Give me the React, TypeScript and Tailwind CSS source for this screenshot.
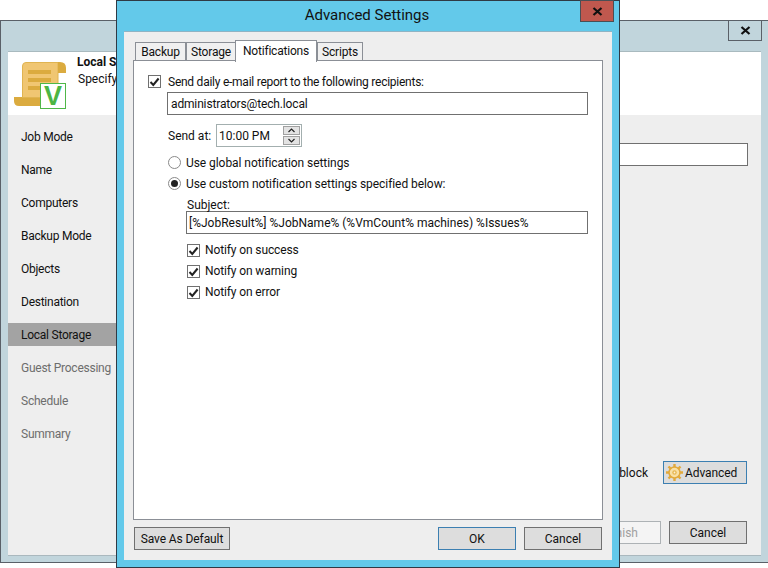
import type { ReactNode } from 'react'

const font = "[font-family:Roboto,'Noto_Sans',sans-serif]"

const steps = [
  { label: 'Job Mode' },
  { label: 'Name' },
  { label: 'Computers' },
  { label: 'Backup Mode' },
  { label: 'Objects' },
  { label: 'Destination' },
  { label: 'Local Storage', active: true },
  { label: 'Guest Processing', muted: true },
  { label: 'Schedule', muted: true },
  { label: 'Summary', muted: true },
]

function CloseGlyph() {
  return (
    <svg width="11" height="9" viewBox="0 0 11 9" fill="none">
      <path d="M1.5 1L9.5 8M9.5 1L1.5 8" stroke="#111" strokeWidth="2.2" />
    </svg>
  )
}

function Check({ label, className = '', textClass = 'ml-[5px] -mt-[2px] tracking-[-0.12px]' }: { label: string; className?: string; textClass?: string }) {
  return (
    <div className={`flex items-center h-[13px] ${className}`}>
      <span className="w-[13px] h-[13px] border border-[#707070] bg-white flex items-center justify-center shrink-0">
        <svg width="11" height="10" viewBox="0 0 11 10" fill="none">
          <path d="M1.5 5L4.3 8L9.6 1.5" stroke="#222" strokeWidth="2" />
        </svg>
      </span>
      <span className={`${textClass} leading-[16px] whitespace-nowrap`}>{label}</span>
    </div>
  )
}

function Radio({ label, checked = false, className = '' }: { label: string; checked?: boolean; className?: string }) {
  return (
    <div className={`flex items-center h-[13px] ${className}`}>
      <span className="w-[13px] h-[13px] rounded-full border border-[#8a8a8a] bg-white flex items-center justify-center shrink-0">
        {checked && <span className="w-[7px] h-[7px] rounded-full bg-[#222]" />}
      </span>
      <span className="ml-[5px] leading-[16px] whitespace-nowrap tracking-[-0.06px]">{label}</span>
    </div>
  )
}

function Button({ children, className = '', primary = false }: { children: ReactNode; className?: string; primary?: boolean }) {
  return (
    <div
      className={`h-[23px] flex items-center justify-center bg-[#dddddd] border ${
        primary ? 'border-[#3c7fb1]' : 'border-[#707070]'
      } leading-[16px] whitespace-nowrap ${className}`}
    >
      {children}
    </div>
  )
}

function Tab({ label, active = false, className = '' }: { label: string; active?: boolean; className?: string }) {
  if (active) {
    return (
      <div className={`h-[22px] -mb-[2px] relative z-10 bg-white border border-b-0 border-[#8b8f96] flex items-start justify-center pt-[2px] leading-[16px] tracking-[-0.2px] ${className}`}>
        {label}
      </div>
    )
  }
  return (
    <div className={`h-[18px] bg-[#f0f0f0] border border-b-0 border-[#8b8f96] flex items-center justify-center pt-[1px] leading-[16px] tracking-[-0.2px] ${className}`}>
      {label}
    </div>
  )
}

function ScrollLogo() {
  return (
    <div className="relative w-[52px] h-[47px]">
      <svg width="52" height="47" viewBox="0 0 52 47">
        <path d="M0 35H30V44H5Q0 44 0 39Z" fill="#dbab3f" />
        <path d="M8.5 4Q8.5 .5 12 .5H44V35.5H8.5Z" fill="#f0c672" stroke="#e0b451" />
        <path d="M44 0H46Q52 0 52 6V11H44Z" fill="#dbab3f" />
        <path d="M14 8H37V12H14ZM14 16H37V20H14ZM14 24H37V28H14Z" fill="#dbab3f" />
      </svg>
      <div className="absolute left-[26px] top-[21px] w-[26px] h-[26px] bg-white border border-[#4fb748] flex items-center justify-center">
        <span className="text-[#4cb543] text-[27px] leading-none font-bold [font-family:'Liberation_Sans',sans-serif]">V</span>
      </div>
    </div>
  )
}

function Gear() {
  return (
    <svg width="17" height="17" viewBox="0 0 17 17" fill="none">
      <g stroke="#e2a93b" strokeWidth="2.4">
        <path d="M8.5 0V17M0 8.5H17M2.5 2.5L14.5 14.5M14.5 2.5L2.5 14.5" />
      </g>
      <circle cx="8.5" cy="8.5" r="5.5" fill="#f8e0a6" stroke="#e2a93b" strokeWidth="1.5" />
      <circle cx="8.5" cy="8.5" r="2.2" fill="#e8b64f" />
      <circle cx="8.5" cy="8.5" r="0.9" fill="#fbf1d8" />
    </svg>
  )
}

function BackWindow() {
  return (
    <div className="absolute left-0 top-[20px] w-[768px] h-[543px] bg-[#c1d5dc] border border-[#5a6068] border-r-0 flex flex-col">
      <div className="h-[30px] shrink-0 flex justify-end pr-[6px]">
        <div className="w-[34px] h-[21px] -mt-[1px] border border-[#5a6068] flex items-center justify-center">
          <CloseGlyph />
        </div>
      </div>
      <div className="ml-[7px] mr-[7px] h-[505px] flex flex-col bg-[#eeeeee] border-b border-[#aab8be]">
        <div className="h-[64px] shrink-0 bg-white border-t border-[#a9babf] flex">
          <div className="ml-[6px] mt-[10px]">
            <ScrollLogo />
          </div>
          <div className="ml-[11px] mt-[2px] leading-[17px]">
            <div className="font-bold">Local Storage</div>
            <div className="ml-[1px]">Specify</div>
          </div>
        </div>
        <div className="flex-1 flex min-h-0">
          <div className="w-[108px] shrink-0 pt-[10px]">
            {steps.map((s) => (
              <div
                key={s.label}
                className={`h-[23px] mb-[10px] pl-[13px] pt-[1px] flex items-center whitespace-nowrap leading-[16px] tracking-[-0.25px] ${
                  s.active ? 'bg-[#a3a3a3]' : ''
                } ${s.muted ? 'text-[#6d6d6d]' : ''}`}
              >
                {s.label}
              </div>
            ))}
          </div>
          <div className="flex-1 flex flex-col items-end pr-[13px]">
            <div className="w-[300px] h-[23px] mt-[28px] bg-white border border-[#707070]" />
            <div className="mt-[295px] pr-[1px] h-[23px] flex items-center w-full justify-end">
              <span className="mr-[15px] leading-[16px]">block</span>
              <Button primary className="w-[84px] !justify-start pl-[2px] tracking-[-0.1px]">
                <span className="mr-[2px]">
                  <Gear />
                </span>
                Advanced
              </Button>
            </div>
            <div className="mt-[37px] pr-[1px] flex">
              <div className="w-[78px] h-[23px] flex items-center justify-center bg-[#f4f4f4] border border-[#adb2b5] text-[#a0a0a0] leading-[16px]">
                Finish
              </div>
              <Button className="w-[78px] ml-[8px]">Cancel</Button>
            </div>
          </div>
        </div>
      </div>
    </div>
  )
}

function SettingsDialog() {
  return (
    <div className="absolute left-[116px] top-0 w-[504px] h-[568px] bg-[#63c9ea] border border-[#2f3a45] flex flex-col">
      <div className="relative h-[30px] shrink-0 flex items-center justify-center pb-[2px] pr-[2px] text-[15px] leading-[20px]">
        Advanced Settings
        <div className="absolute right-[5px] -top-[1px] w-[34px] h-[22px] bg-[#c0584e] border border-[#4a4f55] flex items-center justify-center">
          <CloseGlyph />
        </div>
      </div>
      <div className="mx-[7px] h-[529px] bg-[#eeeeee] border-t border-[#8fb4c4] flex flex-col pl-[9px] pr-[9px]">
        <div className="flex items-end pl-[2px] h-[28px] shrink-0">
          <Tab label="Backup" className="w-[51px]" />
          <Tab label="Storage" className="w-[50px]" />
          <Tab label="Notifications" active className="w-[82px] -ml-[1px]" />
          <Tab label="Scripts" className="w-[46px]" />
        </div>
        <div className="h-[460px] bg-white border border-[#8b8f96] pl-[14px] pt-[14px] pr-[14px]">
          <Check label="Send daily e-mail report to the following recipients:" textClass="ml-[7px] tracking-[-0.25px]" />
          <div className="ml-[19px] mt-[4px] h-[23px] border border-[#707070] px-[3px] flex items-center leading-[16px] tracking-[-0.15px]">
            administrators@tech.local
          </div>
          <div className="ml-[20px] mt-[9px] h-[23px] flex items-center">
            <span className="w-[48px] leading-[16px]">Send at:</span>
            <div className="w-[86px] h-[23px] border border-[#a3afaf] flex items-center pl-[2px] leading-[16px] justify-between pr-[1px]">
              10:00 PM
              <div className="flex flex-col gap-[1px]">
                <span className="w-[17px] h-[9px] bg-[#e3e3e3] border border-[#a0a0a0] flex items-center justify-center">
                  <svg width="7" height="5" viewBox="0 0 7 5" fill="none"><path d="M0.5 4L3.5 1L6.5 4" stroke="#222" strokeWidth="1.2" /></svg>
                </span>
                <span className="w-[17px] h-[9px] bg-[#e3e3e3] border border-[#a0a0a0] flex items-center justify-center">
                  <svg width="7" height="5" viewBox="0 0 7 5" fill="none"><path d="M0.5 1L3.5 4L6.5 1" stroke="#222" strokeWidth="1.2" /></svg>
                </span>
              </div>
            </div>
          </div>
          <Radio label="Use global notification settings" className="ml-[20px] mt-[9px]" />
          <Radio label="Use custom notification settings specified below:" checked className="ml-[20px] mt-[8px]" />
          <div className="ml-[39px] mt-[7px] leading-[16px]">Subject:</div>
          <div className="ml-[38px] mt-[-2px] h-[23px] border border-[#707070] px-[2px] flex items-center leading-[16px] whitespace-nowrap overflow-hidden">
            [%JobResult%] %JobName% (%VmCount% machines) %Issues%
          </div>
          <Check label="Notify on success" className="ml-[39px] mt-[10px]" />
          <Check label="Notify on warning" className="ml-[39px] mt-[8px]" />
          <Check label="Notify on error" className="ml-[39px] mt-[8px]" />
        </div>
        <div className="flex mt-[7px] pl-[1px]">
          <Button className="w-[96px] tracking-[-0.1px]">Save As Default</Button>
          <Button primary className="w-[78px] ml-auto">OK</Button>
          <Button className="w-[78px] ml-[8px] mr-[1px]">Cancel</Button>
        </div>
      </div>
    </div>
  )
}

export default function App() {
  return (
    <div className={`relative w-[768px] h-[568px] overflow-hidden bg-white text-[12px] text-[#111] ${font}`}>
      <BackWindow />
      <SettingsDialog />
    </div>
  )
}
